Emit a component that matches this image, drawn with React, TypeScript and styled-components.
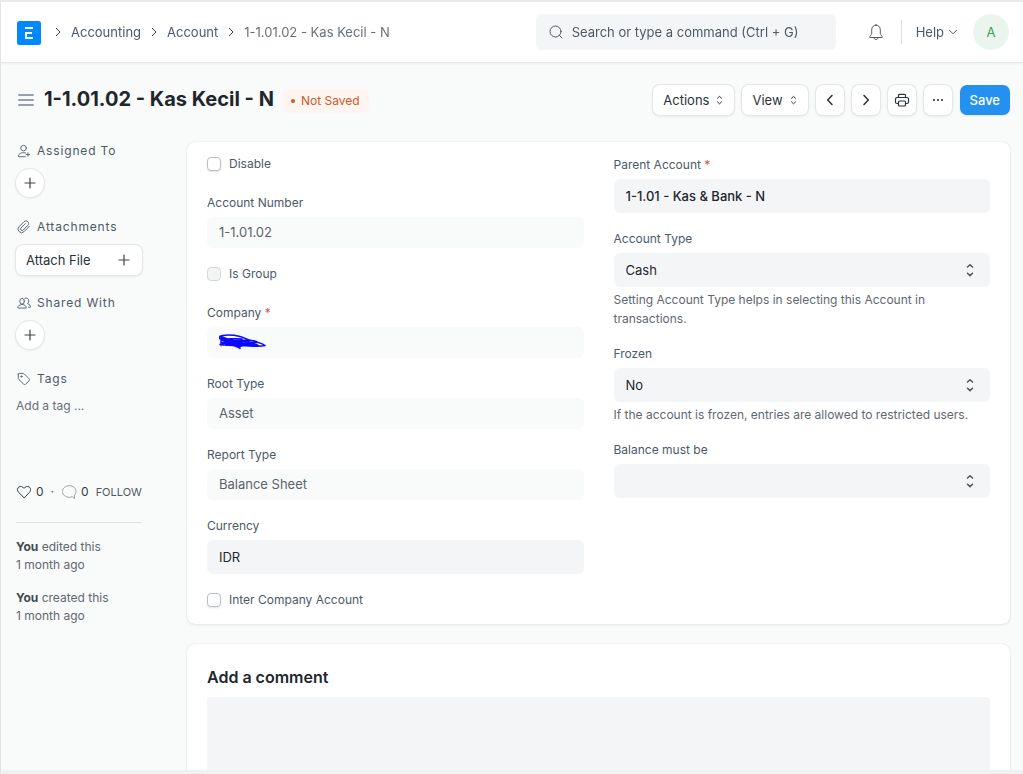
import React from 'react';
import styled, { createGlobalStyle, css } from 'styled-components';

const GlobalStyle = createGlobalStyle`
  *, *::before, *::after { box-sizing: border-box; }
  body {
    margin: 0;
    font-family: Inter, "Liberation Sans", sans-serif;
    font-size: 13px;
    line-height: 18px;
    color: #4c5a67;
    background: #f0f1f3;
  }
  button, input, select, textarea { font: inherit; }
  svg { display: block; flex: none; }
`;

const Frame = styled.div`
  height: 100vh;
  display: flex;
  flex-direction: column;
  overflow: hidden;
  border: solid #e2e4e5;
  border-width: 2px 0 0 1px;
  border-top-color: #e9eaeb;
  padding-bottom: 4px;
`;

const Navbar = styled.header`
  flex: none;
  display: flex;
  align-items: center;
  height: 61px;
  padding: 0 14px 0 16px;
  background: #fff;
  border-bottom: 1px solid #e4e9e9;
  box-shadow: 0 1px 2px rgba(25, 39, 52, 0.05);
  z-index: 1;
`;

const Brand = styled.a`
  display: block;
  padding-top: 2px;
  margin-right: 14px;
`;

const Crumbs = styled.nav`
  display: flex;
  align-items: center;
  gap: 10px;
  flex: 1;
`;

const Crumb = styled.a<{ $current?: boolean }>`
  color: ${(p) => (p.$current ? '#687178' : '#4c5a67')};
  text-decoration: none;
  white-space: nowrap;
`;

const SearchBox = styled.label`
  display: flex;
  align-items: center;
  gap: 8px;
  width: 300px;
  height: 36px;
  padding: 0 12px;
  border-radius: 6px;
  background: #f4f5f6;
  color: #4c5a67;
`;

const SearchInput = styled.input`
  flex: 1;
  min-width: 0;
  border: 0;
  padding: 0;
  outline: 0;
  background: transparent;
  &::placeholder { color: #505a62; opacity: 1; }
`;

const PlainButton = styled.button`
  display: flex;
  align-items: center;
  gap: 4px;
  border: 0;
  padding: 0;
  background: transparent;
  color: #505a62;
`;

const NavTools = styled.div`
  display: flex;
  align-items: center;
  margin-left: 31px;
`;

const Divider = styled.span`
  width: 1px;
  height: 24px;
  margin: 0 14px 0 16px;
  background: #dce0e3;
`;

const Avatar = styled.button`
  width: 36px;
  height: 36px;
  margin-left: 15px;
  padding: 0;
  border: 0;
  border-radius: 50%;
  background: #eaf5ee;
  color: #38a160;
`;

const Scroll = styled.div`
  flex: 1;
  min-height: 0;
  overflow: auto;
  scrollbar-width: none;
  background: #f9fafa;
`;

const PageHead = styled.div`
  display: flex;
  align-items: center;
  height: 74px;
  padding: 0 13px 0 16px;
`;

const Title = styled.h1`
  margin: 0 8px 2px 9px;
  font-size: 20px;
  line-height: 28px;
  font-weight: 700;
  color: #1f272e;
  white-space: nowrap;
`;

const Indicator = styled.span`
  display: flex;
  align-items: center;
  gap: 6px;
  height: 24px;
  margin-top: 2px;
  padding: 0 9px;
  border-radius: 6px;
  background: #fff5f0;
  color: #cb5a2a;
  font-size: 12px;
  &::before {
    content: '';
    width: 4px;
    height: 4px;
    border-radius: 50%;
    background: currentColor;
  }
`;

const Actions = styled.div`
  display: flex;
  gap: 8px;
  margin-left: auto;
`;

const raised = css`
  border: 0;
  background: #fff;
  color: #29323a;
  box-shadow: 0 0 0 1px #e4e6e8, 0 1px 3px rgba(25, 39, 52, 0.14);
`;

const Button = styled.button<{ $primary?: boolean; $icon?: boolean }>`
  ${raised}
  display: flex;
  align-items: center;
  justify-content: center;
  gap: 6px;
  height: 30px;
  padding: 0 ${(p) => (p.$icon ? 6 : 10)}px;
  border-radius: 7px;
  ${(p) => p.$icon && 'width: 28px;'}
  ${(p) =>
    p.$primary &&
    css`
      background: #2490ef;
      color: #fff;
      box-shadow: 0 1px 2px rgba(25, 39, 52, 0.1);
      font-weight: 500;
    `}
`;

const Body = styled.div`
  display: grid;
  grid-template-columns: 126px minmax(0, 1fr);
  column-gap: 45px;
  padding: 5px 13px 15px 15px;
`;

const Sidebar = styled.aside`
  display: flex;
  flex-direction: column;
`;

const SideSection = styled.section`
  height: 76px;
`;

const SideLabel = styled.h2`
  display: flex;
  align-items: center;
  gap: 6px;
  margin: 0 0 9px 1px;
  font-size: 12px;
  line-height: 18px;
  font-weight: 400;
  letter-spacing: 0.07em;
  color: #4c5a67;
`;

const RoundButton = styled.button`
  ${raised}
  display: grid;
  place-items: center;
  width: 28px;
  height: 28px;
  padding: 0;
  border-radius: 50%;
`;

const AttachButton = styled(Button)`
  width: 126px;
  justify-content: space-between;
`;

const TagLink = styled.a`
  display: block;
  font-size: 12px;
  color: #687178;
  text-decoration: none;
`;

const Social = styled.div`
  display: flex;
  align-items: center;
  margin-top: 37px;
  padding-bottom: 21px;
  border-bottom: 1px solid #dfe2e3;
  font-size: 12px;
`;

const SocialCount = styled(PlainButton)`
  color: #333c44;
`;

const Dot = styled.span`
  margin: 0 7px;
`;

const FollowButton = styled(PlainButton)`
  margin-left: 7px;
  font-size: 11px;
`;

const Activity = styled.p`
  margin: 15px 0 0;
  font-size: 12px;
  line-height: 18px;
  color: #5f686f;
  b { color: #414a51; font-weight: 700; }
`;

const Cards = styled.main`
  display: flex;
  flex-direction: column;
  gap: 20px;
`;

const Card = styled.section`
  border-radius: 8px;
  background: #fff;
  box-shadow: 0 0 1px rgba(25, 39, 52, 0.2), 0 1px 3px rgba(25, 39, 52, 0.08);
`;

const FormCard = styled(Card)`
  display: grid;
  grid-template-columns: 1fr 1fr;
  column-gap: 30px;
  padding: 13px 20px 15px;
`;

const Column = styled.div<{ $lower?: boolean }>`
  padding-top: ${(p) => (p.$lower ? 1 : 0)}px;
  > :last-child { margin-bottom: 0; }
`;

const Field = styled.div`
  margin-bottom: 17px;
`;

const FieldLabel = styled.label`
  display: block;
  margin-bottom: 5px;
  font-size: 12px;
  line-height: 18px;
`;

const Required = styled.span`
  color: #e24c4c;
`;

const ReadOnly = styled.output`
  display: flex;
  align-items: center;
  height: 31px;
  padding: 0 12px 1px;
  border-radius: 6px;
  background: #f9fafa;
  color: #5a646c;
`;

const control = css`
  display: block;
  width: 100%;
  height: 34px;
  padding: 0 12px;
  border: 0;
  border-radius: 6px;
  background: #f4f5f6;
  color: #1f272e;
`;

const TextInput = styled.input<{ $strong?: boolean }>`
  ${control}
  font-weight: ${(p) => (p.$strong ? 500 : 400)};
`;

const SelectWrap = styled.div`
  display: grid;
  align-items: center;
  color: #4c555c;
  > * { grid-area: 1 / 1; }
  > svg { justify-self: end; margin-right: 16px; pointer-events: none; }
`;

const Select = styled.select`
  ${control}
  appearance: none;
`;

const Help = styled.p`
  margin: 3px 0 0;
  font-size: 12px;
  line-height: 19px;
  color: #5f686f;
`;

const CheckLabel = styled.label`
  display: flex;
  align-items: center;
  gap: 8px;
  margin-bottom: 21px;
  font-size: 12px;
`;

const CheckBox = styled.input`
  appearance: none;
  width: 14px;
  height: 14px;
  margin: 0;
  border: 1px solid #b8c0c7;
  border-radius: 4px;
  background: #fff;
  box-shadow: 0 1px 2px rgba(0, 0, 0, 0.1);
  &:disabled {
    background: #f3f4f4;
    border-color: #d5d8da;
    box-shadow: none;
  }
`;

const CommentCard = styled(Card)`
  padding: 20px;
`;

const CommentTitle = styled.label`
  display: block;
  margin-bottom: 7px;
  font-size: 16px;
  line-height: 26px;
  font-weight: 600;
  color: #1f272e;
`;

const CommentBox = styled.textarea`
  display: block;
  width: 100%;
  height: 120px;
  padding: 12px;
  border: 0;
  border-radius: 3px;
  resize: none;
  background: #f4f5f6;
`;

type IconProps = { size?: number; width?: number; children: React.ReactNode; box?: string; color?: string };
const Icon = ({ size = 16, width = 1, box = '0 0 16 16', color = 'currentColor', children }: IconProps) => (
  <svg width={size} height={size} viewBox={box} fill="none" stroke={color} strokeWidth={width}
    strokeLinecap="round" strokeLinejoin="round" aria-hidden="true">{children}</svg>
);

const ChevronRight = () => (
  <svg width="6" height="10" viewBox="0 0 6 10" fill="none" stroke="#3b444c" strokeLinecap="round" strokeLinejoin="round" aria-hidden="true">
    <path d="M1.3 1.3 5 5 1.3 8.7" />
  </svg>
);

const Sorter = ({ strong }: { strong?: boolean }) => (
  <svg width={strong ? 8 : 9} height="14" viewBox={strong ? '0 0 8 14' : '0 0 9 14'} fill="none" stroke="currentColor" strokeWidth={strong ? 1.5 : 1}
    strokeLinecap="round" strokeLinejoin="round" aria-hidden="true">
    {strong ? <path d="M1.5 4 4 1.7 6.5 4M1.5 10.3 4 12.6 6.5 10.3" /> : <path d="M2.5 5.3 4.500 3.4 6.5 5.3M2.5 8.9 4.500 10.800 6.5 8.9" />}
  </svg>
);

const Plus = () => <Icon width={1.2} color="#3c454c"><path d="M8 3v10M3 8h10" /></Icon>;

const Scribble = () => (
  <svg width="50" height="18" viewBox="1 0 50 18" fill="none" stroke="#0a0aff" strokeWidth="1.5"
    strokeLinecap="round" strokeLinejoin="round" role="img" aria-label="Hidden company name">
    <path d="M1 4c4-3 15-2 20-.8S28 6 31 7s11 2 16 5.500c-5 1.500-14 .5-20 .3S9 12.500 2 11.500C8 9 15 8 24 6 14 5 7 7 1 5c6 5 14 6.500 25 7.500C18 8 8 6 3 3.500c8 5 16 4 27 3.500 5 .5 9 1 9 2-8 2-22 3-35 .5C13 12 19 13 22 15.500c0-3.500-10-7.500-18-9M3 4.500v7c10-5 25-3 36 0-9 2-18-2-27-4 9 6 15 5 28 5" />
    <path d="M10 7c7 5 8 2 18 1.500M9 8c7 5 15 4 25 3M15 11l8 2M24 8l12 2" strokeWidth="2" />
    <path d="M3 11v2" stroke="#7a1060" strokeWidth="1" />
  </svg>
);

const App = () => (
  <>
    <GlobalStyle />
    <Frame>
      <Navbar>
        <Brand href="#" aria-label="Home">
          <svg width="24" height="24" viewBox="0 0 24 24" aria-hidden="true">
            <rect width="24" height="24" rx="2.500" fill="#0089ff" />
            <path d="M8 6h8v2H8zM8 11h7v2h-5v3h6v2H8z" fill="#fff" />
          </svg>
        </Brand>
        <Crumbs aria-label="Breadcrumb">
          <ChevronRight />
          <Crumb href="#">Accounting</Crumb>
          <ChevronRight />
          <Crumb href="#">Account</Crumb>
          <ChevronRight />
          <Crumb href="#" $current>1-1.01.02 - Kas Kecil - N</Crumb>
        </Crumbs>
        <SearchBox>
          <Icon><circle cx="7.500" cy="7.500" r="5.500" /><path d="m11.500 11.500 2.500 2.500" /></Icon>
          <SearchInput type="text" aria-label="Search" placeholder="Search or type a command (Ctrl + G)" />
        </SearchBox>
        <NavTools>
          <PlainButton aria-label="Notifications">
            <Icon size={18} box="0 0 18 18">
              <path d="M9 2.200V1.500M9 2.200c-2.600 0-4.300 2-4.300 4.500v3.500c0 1-.4 1.500-1.100 2.300-.6.700-.9 1.300-.9 2h12.600c0-.7-.3-1.300-.9-2-.7-.8-1.100-1.300-1.100-2.300V6.700c0-2.500-1.700-4.500-4.300-4.500ZM6.800 14.600c.2 1.200 1 1.900 2.200 1.900s2-.7 2.200-1.900" />
            </Icon>
          </PlainButton>
          <Divider />
          <PlainButton>
            <span>Help</span>
            <svg width="10" height="8" viewBox="0 0 10 8" fill="none" stroke="currentColor" strokeLinecap="round" strokeLinejoin="round" aria-hidden="true">
              <path d="M1.500 2.300 5 5.800 8.500 2.300" />
            </svg>
          </PlainButton>
          <Avatar aria-label="Account menu">A</Avatar>
        </NavTools>
      </Navbar>
      <Scroll>
        <PageHead>
          <PlainButton aria-label="Toggle sidebar">
            <svg width="18" height="14" viewBox="0 0 18 14" stroke="#98a1a9" strokeWidth="2" strokeLinecap="round" aria-hidden="true">
              <path d="M2 2h14M2 7h14M2 12h14" />
            </svg>
          </PlainButton>
          <Title>1-1.01.02 - Kas Kecil - N</Title>
          <Indicator>Not Saved</Indicator>
          <Actions>
            <Button>Actions <Sorter /></Button>
            <Button>View <Sorter /></Button>
            <Button $icon aria-label="Previous"><Icon width={1.500}><path d="M10 3.500 5.700 8l4.300 4.500" /></Icon></Button>
            <Button $icon aria-label="Next"><Icon width={1.500}><path d="M6 3.500 10.300 8 6 12.500" /></Icon></Button>
            <Button $icon aria-label="Print">
              <Icon width={1.200}>
                <path d="M4.500 5.500V3.200c0-.5.400-.9.900-.9h5.200c.5 0 .9.400.9.900v2.300M4 11.500H3c-.8 0-1.500-.7-1.500-1.500V7.200c0-.9.700-1.700 1.600-1.700h9.800c.9 0 1.600.8 1.600 1.700V10c0 .8-.7 1.500-1.500 1.500h-1" />
                <rect x="4.500" y="9" width="7" height="5" rx="1" />
              </Icon>
            </Button>
            <Button $icon aria-label="More">
              <svg width="16" height="16" viewBox="0 0 16 16" fill="#1f272e" aria-hidden="true">
                <circle cx="4" cy="8" r="1" /><circle cx="8" cy="8" r="1" /><circle cx="12" cy="8" r="1" />
              </svg>
            </Button>
            <Button $primary>Save</Button>
          </Actions>
        </PageHead>
        <Body>
          <Sidebar>
            <SideSection>
              <SideLabel>
                <Icon size={14}><circle cx="7.500" cy="4.700" r="3.200" /><path d="M9.500 14.500H2.300c-.7 0-1-.5-.8-1.100.7-2.300 3-3.500 6-3.500 1 0 1.800.1 2.500.4M12.500 10v4M10.500 12h4" /></Icon>
                Assigned To
              </SideLabel>
              <RoundButton aria-label="Assign"><Plus /></RoundButton>
            </SideSection>
            <SideSection>
              <SideLabel>
                <Icon size={14}><path d="m14.300 7-6.200 6.300a4 4 0 0 1-5.700-5.700l5.700-5.700a3 3 0 0 1 4.300 0c1.100 1.200 1.100 3 0 4.200l-5.300 5.400a1.700 1.700 0 0 1-2.500-2.500l4.900-4.900" /></Icon>
                Attachments
              </SideLabel>
              <AttachButton>Attach File <Plus /></AttachButton>
            </SideSection>
            <SideSection>
              <SideLabel>
                <Icon size={14}><path d="M6 9.500c-1.300.6-4 .9-4.700 2.300-.2.500-.3 1.200-.3 2h9.500c0-.8-.1-1.500-.3-2-.6-1.400-3-1.700-4.200-2.300" /><ellipse cx="5.800" cy="6" rx="2.600" ry="3.300" /><path d="M9 2.800c2.900-1.500 5 .7 4.200 4-.2.800-.6 1.500-1.200 2 1 .6 2.500.8 3 2 .3.600.3 1.400.3 2h-2" /></Icon>
                Shared With
              </SideLabel>
              <RoundButton aria-label="Share"><Plus /></RoundButton>
            </SideSection>
            <SideSection>
              <SideLabel>
                <Icon size={14}><path d="M1.500 2.500v4.700c0 .5.200 1 .6 1.300l5.500 5.300c.7.700 1.700.7 2.400 0l3.800-3.700c.7-.7.7-1.700 0-2.400L8.400 2.300c-.4-.4-.8-.6-1.300-.6H2.500c-.6 0-1 .3-1 .8Z" /><circle cx="5" cy="5.200" r=".8" /></Icon>
                Tags
              </SideLabel>
              <TagLink href="#">Add a tag ...</TagLink>
            </SideSection>
            <Social>
              <SocialCount aria-label="Likes">
                <Icon><path d="M8 13.700 2.500 8.300C.8 6.500 1.200 4 2.900 3c1.700-1 3.800-.5 5.100 1.300C9.300 2.500 11.400 2 13.100 3c1.700 1 2.100 3.500.4 5.300Z" /></Icon>0
              </SocialCount>
              <Dot>·</Dot>
              <SocialCount aria-label="Comments">
                <Icon color="#98a1a9"><path d="M13.500 14.300V11C14.500 10 15 8.700 15 7.500c0-3.300-2.900-5.800-6.700-5.800S1.500 4.200 1.500 7.500s2.900 5.800 6.800 5.800c1 0 1.900-.2 2.700-.5Z" /></Icon>0
              </SocialCount>
              <FollowButton>FOLLOW</FollowButton>
            </Social>
            <Activity><b>You</b> edited this<br />1 month ago</Activity>
            <Activity><b>You</b> created this<br />1 month ago</Activity>
          </Sidebar>
          <Cards>
            <FormCard as="form">
              <Column>
                <CheckLabel><CheckBox type="checkbox" />Disable</CheckLabel>
                <Field>
                  <FieldLabel htmlFor="number">Account Number</FieldLabel>
                  <ReadOnly id="number">1-1.01.02</ReadOnly>
                </Field>
                <CheckLabel><CheckBox type="checkbox" disabled />Is Group</CheckLabel>
                <Field>
                  <FieldLabel htmlFor="company">Company <Required>*</Required></FieldLabel>
                  <ReadOnly id="company"><Scribble /></ReadOnly>
                </Field>
                <Field>
                  <FieldLabel htmlFor="root">Root Type</FieldLabel>
                  <ReadOnly id="root">Asset</ReadOnly>
                </Field>
                <Field>
                  <FieldLabel htmlFor="report">Report Type</FieldLabel>
                  <ReadOnly id="report">Balance Sheet</ReadOnly>
                </Field>
                <Field>
                  <FieldLabel htmlFor="currency">Currency</FieldLabel>
                  <TextInput id="currency" defaultValue="IDR" />
                </Field>
                <CheckLabel><CheckBox type="checkbox" />Inter Company Account</CheckLabel>
              </Column>
              <Column $lower>
                <Field>
                  <FieldLabel htmlFor="parent">Parent Account <Required>*</Required></FieldLabel>
                  <TextInput id="parent" $strong defaultValue="1-1.01 - Kas & Bank - N" />
                </Field>
                <Field>
                  <FieldLabel htmlFor="type">Account Type</FieldLabel>
                  <SelectWrap>
                    <Select id="type" defaultValue="Cash"><option>Cash</option><option>Bank</option></Select>
                    <Sorter strong />
                  </SelectWrap>
                  <Help>Setting Account Type helps in selecting this Account in transactions.</Help>
                </Field>
                <Field>
                  <FieldLabel htmlFor="frozen">Frozen</FieldLabel>
                  <SelectWrap>
                    <Select id="frozen" defaultValue="No"><option>No</option><option>Yes</option></Select>
                    <Sorter strong />
                  </SelectWrap>
                  <Help>If the account is frozen, entries are allowed to restricted users.</Help>
                </Field>
                <Field>
                  <FieldLabel htmlFor="balance">Balance must be</FieldLabel>
                  <SelectWrap>
                    <Select id="balance" defaultValue=""><option value="" /><option>Debit</option><option>Credit</option></Select>
                    <Sorter strong />
                  </SelectWrap>
                </Field>
              </Column>
            </FormCard>
            <CommentCard>
              <CommentTitle htmlFor="comment">Add a comment</CommentTitle>
              <CommentBox id="comment" />
            </CommentCard>
          </Cards>
        </Body>
      </Scroll>
    </Frame>
  </>
);

export default App;
